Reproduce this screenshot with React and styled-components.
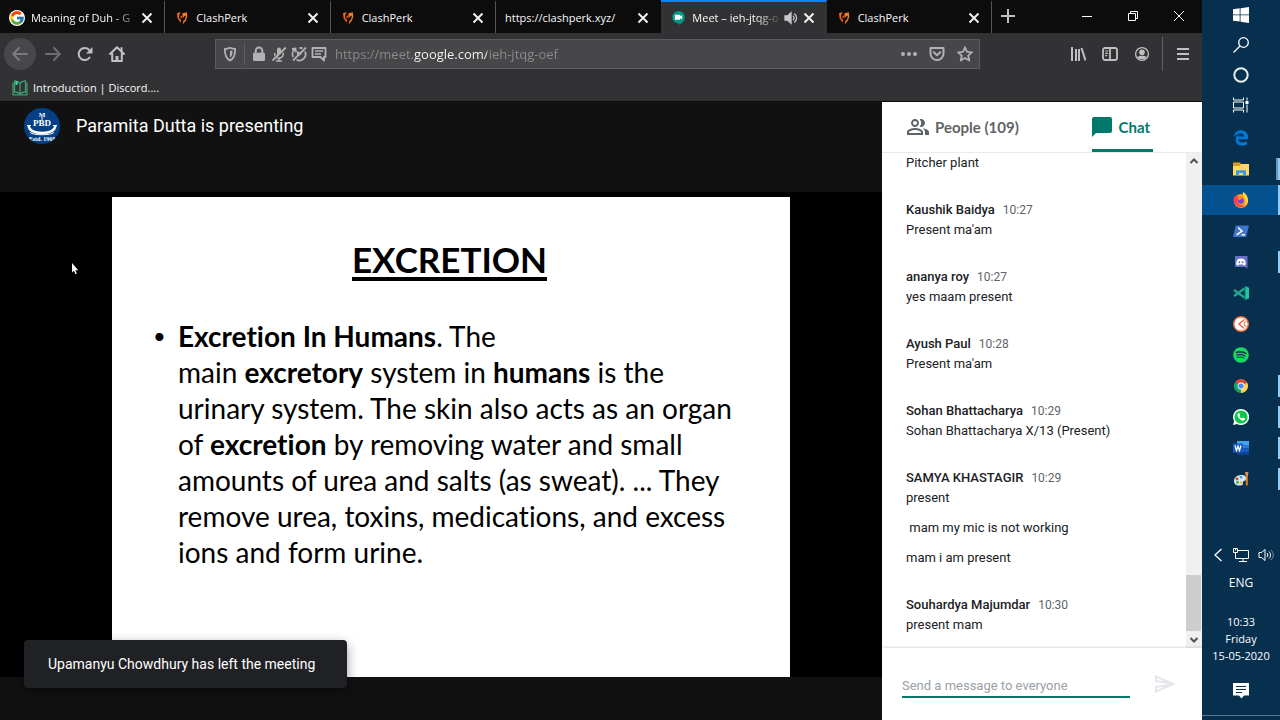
import React from "react";
import styled, { createGlobalStyle } from "styled-components";
import { FcGoogle } from "react-icons/fc";
import { FaSpotify, FaEdgeLegacy } from "react-icons/fa";
import { MdOutlinePeopleAlt, MdChatBubble, MdOutlineSend } from "react-icons/md";

const ui = `"Open Sans", "Noto Sans", sans-serif`;

const GlobalStyle = createGlobalStyle`
  * { box-sizing: border-box; }
  body { margin: 0; background: #0c0c0d; font-family: Roboto, "Liberation Sans", sans-serif; }
  button, input { font: inherit; color: inherit; background: none; border: 0; padding: 0; margin: 0; outline: 0; }
  svg { display: block; flex: none; }
  p, h1, h2, ul { margin: 0; padding: 0; }
`;

const Desktop = styled.div`
  display: flex;
  height: 100vh;
`;

const Browser = styled.div`
  flex: 1;
  min-width: 0;
  display: flex;
  flex-direction: column;
`;

/* ---------- tab strip ---------- */

const TabStrip = styled.header`
  display: flex;
  height: 33px;
  background: #0c0c0d;
  color: #f9f9fa;
  font: 11px/33px ${ui};
`;

const Tabs = styled.div`
  flex: 0 1 992px;
  min-width: 0;
  display: grid;
  grid-template-columns: repeat(6, minmax(0, 1fr));
`;

const Tab = styled.div`
  display: flex;
  align-items: center;
  height: 33px;
  padding: 0 11px 0 9px;
  background: ${(p) => (p.$active ? "#323234" : "transparent")};
  border-top: 2px solid ${(p) => (p.$active ? "#0a84ff" : "transparent")};
  border-right: 1px solid ${(p) => (p.$edge ? "#56565a" : "transparent")};
`;

const TabTitle = styled.button`
  flex: 1;
  min-width: 0;
  display: flex;
  align-items: center;
  gap: 6px;
  height: 31px;
  overflow: hidden;
  white-space: nowrap;
  text-align: left;
  ${(p) => p.$fade && "mask-image: linear-gradient(to right, #000 calc(100% - 28px), transparent);"}
`;

const IconButton = styled.button`
  flex: none;
  display: flex;
  align-items: center;
  justify-content: center;
  width: ${(p) => p.$w || 32}px;
  height: ${(p) => p.$h || 32}px;
  color: ${(p) => p.$color || "#c0c0c2"};
`;

const BackButton = styled(IconButton)`
  margin-right: 1px;
  border-radius: 50%;
  background: #48484a;
`;

const MuteButton = styled(IconButton)`
  margin-right: 4px;
`;

const WindowControls = styled.div`
  display: flex;
  margin-left: auto;
`;

/* ---------- navigation ---------- */

const NavBar = styled.nav`
  display: flex;
  align-items: center;
  height: 41px;
  padding: 0 3px 0 4px;
  background: #323234;
`;

const AddressBar = styled.div`
  flex: 1;
  min-width: 0;
  display: flex;
  align-items: center;
  height: 30px;
  margin: 0 82px;
  background: #474749;
  border: 1px solid #5c5c5f;
`;

const Divider = styled.span`
  width: 1px;
  height: ${(p) => p.$h}px;
  margin: 0 ${(p) => p.$m}px;
  background: #5f6062;
`;

const Address = styled.input`
  flex: 1;
  min-width: 0;
  height: 28px;
  margin-left: 10px;
  font: 13px/28px ${ui};
  color: transparent;
  background: linear-gradient(to right, #8b8b8d 79px, #f9f9fa 79px 152px, #8b8b8d 152px);
  background-clip: text;
  -webkit-background-clip: text;
`;

const Bookmarks = styled.div`
  display: flex;
  height: 28px;
  padding: 0 12px;
  background: #323234;
  border-bottom: 1px solid #0c0c0d;
  color: #f9f9fa;
  font: 11px/27px ${ui};
`;

const Bookmark = styled.a`
  display: flex;
  align-items: center;
  gap: 5px;
  color: inherit;
  text-decoration: none;
`;

/* ---------- meeting ---------- */

const Meeting = styled.main`
  flex: 1;
  display: flex;
  min-height: 0;
`;

const Stage = styled.section`
  position: relative;
  flex: 1;
  min-width: 0;
  display: flex;
  flex-direction: column;
  background: #111;
`;

const Presenter = styled.div`
  display: flex;
  align-items: flex-start;
  gap: 16px;
  height: 90px;
  padding: 6px 24px;
  color: #fff;
  font-size: 18px;
  line-height: 36px;
`;

const Video = styled.div`
  flex: 1;
  display: flex;
  margin-bottom: 43px;
  padding: 5px 92px 0 112px;
  background: #000;
`;

const Slide = styled.article`
  flex: 1;
  min-width: 0;
  padding: 44px 20px 0 66px;
  background: #fff;
  color: #000;
  font-family: Lato, "Open Sans", sans-serif;
  font-variant-ligatures: none;
  white-space: nowrap;
`;

const SlideTitle = styled.h1`
  width: max-content;
  margin: 0 auto 37px 174px;
  border-bottom: 4px solid #000;
  font-size: 35px;
  line-height: 36px;
`;

const SlideList = styled.ul`
  font-size: 28px;
  line-height: 36px;
  list-style: none;

  li::before {
    content: "•";
    float: left;
    width: 25px;
    margin-left: -25px;
    font-size: 22px;
  }
`;

const Toast = styled.div`
  position: absolute;
  left: 24px;
  bottom: 32px;
  min-width: 323px;
  padding: 14px 24px;
  border-radius: 4px;
  background: #202124;
  box-shadow: 0 4px 12px rgba(0, 0, 0, 0.4);
  color: #fff;
  font-size: 14px;
  line-height: 20px;
`;

const Pointer = styled.svg`
  position: absolute;
  left: 71px;
  top: 160px;
`;

/* ---------- chat ---------- */

const Panel = styled.aside`
  flex: none;
  width: 320px;
  display: flex;
  flex-direction: column;
  background: #fff;
  color: #202124;
  font-size: 13px;
  line-height: 20px;
`;

const PanelTabs = styled.div`
  display: flex;
  justify-content: space-between;
  height: 51px;
  padding: 0 49px 0 24px;
  border-bottom: 1px solid #e8eaed;
`;

const PanelTab = styled.button`
  display: flex;
  align-items: center;
  gap: 5px;
  height: 50px;
  padding-right: 3px;
  color: ${(p) => (p.$active ? "#00796b" : "#5f6368")};
  font: 700 15px/20px Lato, sans-serif;
  background: ${(p) =>
    p.$active ? "linear-gradient(#00796b, #00796b) 2px 100% / 100% 3px no-repeat" : "none"};
`;

const Log = styled.div`
  flex: 1;
  display: flex;
  min-height: 0;
`;

const Messages = styled.div`
  flex: 1;
  display: flex;
  flex-direction: column;
  justify-content: flex-end;
  gap: 27px;
  overflow: hidden;
  padding: 0 24px 13px;
`;

const Message = styled.div`
  display: flex;
  flex-direction: column;
`;

const Author = styled.h2`
  display: flex;
  gap: 8px;
  font-size: 13px;
  font-weight: 500;
  line-height: 20px;
`;

const Time = styled.time`
  color: #5f6368;
  font-size: 12px;
  font-weight: 400;
`;

const Line = styled.p`
  white-space: pre;
  & + & { margin-top: 10px; }
`;

const ScrollTrack = styled.div`
  display: flex;
  flex-direction: column;
  justify-content: space-between;
  width: 16px;
  background: #f0f0f0;
`;

const ScrollThumb = styled.div`
  width: 15px;
  height: 56px;
  margin-top: auto;
  background: #cdcdcd;
`;

const Composer = styled.form`
  display: flex;
  align-items: flex-start;
  gap: 23px;
  height: 72px;
  padding: 24px 25px 0 20px;
  background: #fff;
  box-shadow: 0 0 3px rgba(0, 0, 0, 0.25);
`;

const MessageInput = styled.input`
  flex: 1;
  min-width: 0;
  height: 26px;
  padding-top: 2px;
  border-bottom: 2px solid #00796b;
  font-size: 13px;
  &::placeholder { color: #9aa0a6; opacity: 1; }
`;

/* ---------- taskbar ---------- */

const Taskbar = styled.aside`
  flex: none;
  width: 78px;
  display: flex;
  flex-direction: column;
  background: #07304f;
  color: #fff;
`;

const AppList = styled.div`
  display: flex;
  flex-direction: column;
  gap: 1px;
  padding-top: 3px;
`;

const TaskButton = styled.button`
  display: flex;
  align-items: center;
  justify-content: center;
  width: 100%;
  height: 30px;
  background:
    linear-gradient(#90cbf8, #90cbf8) 100% 50% / ${(p) => (p.$mark ? 2 : 0)}px ${(p) => (p.$mark === "full" ? 30 : 22)}px no-repeat,
    linear-gradient(#7396af, #7396af) 100% 50% / ${(p) => (p.$mark === "stack" ? 4 : 0)}px 22px no-repeat,
    ${(p) => (p.$mark === "full" ? "#03528f" : "transparent")};
`;

const Tray = styled.div`
  display: flex;
  flex-direction: column;
  align-items: center;
  margin-top: auto;
  margin-bottom: 4px;
  border-bottom: 1px solid #587791;
  font: 12px/24px ${ui};
`;

const TrayRow = styled.div`
  display: flex;
  align-items: center;
  justify-content: space-between;
  width: 66px;
  height: 24px;
  margin-bottom: 4px;
  padding-left: 5px;
`;

const Clock = styled.time`
  margin: 18px 0 17px;
  font-size: 11px;
  line-height: 17px;
  text-align: center;
`;

const Notifications = styled.button`
  height: 20px;
  margin-bottom: 14px;
`;

/* ---------- drawings ---------- */

const Svg = ({ s = 16, w, h, box, children, ...rest }) => (
  <svg width={w || s} height={h || s} viewBox={box || `0 0 ${w || s} ${h || s}`} fill="none" aria-hidden="true" {...rest}>
    {children}
  </svg>
);

const CloseIcon = () => (
  <Svg s={12} stroke="#f0f0f1" strokeWidth="2"><path d="M1.500 1.500l9 9M10.500 1.500l-9 9" /></Svg>
);

const ClashIcon = () => (
  <Svg>
    <path d="M6.600 2L3 3.300 3.600 8.200 6.600 12.800 7 9.600 5.300 8.800 5 5.800z" fill="#f4671f" />
    <path d="M6.800 5.500l1.400.4-1 2.600-.9-.4z" fill="#f4671f" />
    <path d="M8.400 3.200l4.400-.9.500 4.200-1.300 4-3.600 4.300 1.200-4.600 1.500-.8.700-3.700-1.600.5-1.600 2.300z" fill="#f57a20" />
  </Svg>
);

const MeetIcon = () => (
  <Svg>
    <path d="M8.500 1a6.200 6.200 0 0 1 6.200 6.200c0 4-3.400 6.200-5.400 7.800v-1.600h-.8A6.200 6.200 0 0 1 8.500 1z" fill="#009688" />
    <path d="M4.800 4.700h5.400v1.800l2-1.500v4.400l-2-1.500v1.800H4.800z" fill="#fff" />
  </Svg>
);

const SpeakerIcon = () => (
  <Svg s={14} stroke="#c8c8ca" strokeWidth="1.300">
    <path d="M1 5h2.500L7 1.800v10.400L3.500 9H1z" fill="#c8c8ca" />
    <path d="M9 4.800c1.300 1 1.300 3.400 0 4.400M10.300 2.500c3 2 3 7 0 9" />
  </Svg>
);

const Arrow = ({ flip }) => (
  <Svg stroke="currentColor" strokeWidth="2" strokeLinecap="round" strokeLinejoin="round" transform={flip ? "rotate(180)" : undefined}>
    <path d="M15 8H1.500M7 2L1.200 8 7 14" />
  </Svg>
);

const ReloadIcon = () => (
  <Svg>
    <path d="M12.600 11.500A6 6 0 1 1 12 3.800" stroke="currentColor" strokeWidth="2" strokeLinecap="round" />
    <path d="M15.500 1v6.500H9z" fill="currentColor" />
  </Svg>
);

const HomeIcon = () => (
  <Svg stroke="currentColor" strokeWidth="2" strokeLinejoin="round" strokeLinecap="round">
    <path d="M1 8l7-6.800L15 8M3.200 7.500V15h9.600V7.500" />
    <path d="M8 15V10" strokeWidth="3" strokeLinecap="butt" />
    <path d="M12.500 2v3" />
  </Svg>
);

const ShieldIcon = () => (
  <Svg>
    <path d="M8 1.800c2 .9 3.700 1.200 5.200 1.200 0 5.600-.7 9.500-5.200 11.500C3.500 12.500 2.800 8.600 2.800 3 4.300 3 6 2.700 8 1.800z" stroke="currentColor" strokeWidth="1.800" strokeLinejoin="round" />
    <path d="M8 4.500c.8.300 1.800.5 2.500.6 0 3.600-.5 5.300-2.500 6.600z" fill="currentColor" />
  </Svg>
);

const LockIcon = () => (
  <Svg>
    <path d="M4.700 8V4.800a3.300 3.300 0 0 1 6.600 0V8" stroke="currentColor" strokeWidth="2" />
    <rect x="2" y="6.800" width="12" height="8.200" rx="1.200" fill="currentColor" />
  </Svg>
);

const MicOffIcon = () => (
  <Svg stroke="currentColor" strokeWidth="1.500">
    <path d="M6 3.500a2 2 0 0 1 4 0v3l-4 4z" fill="currentColor" stroke="none" />
    <path d="M3.800 7v1.500c0 .5.100 1 .3 1.500M12.200 6.500v2c0 3-4.500 4.700-6.500 3M8 12.500V15M5 15h6" />
    <path d="M14.800 1.500L1.500 14.500" strokeWidth="1.800" />
  </Svg>
);

const AutoplayOffIcon = () => (
  <Svg stroke="currentColor" strokeWidth="1.800">
    <path d="M2.200 11A6.200 6.200 0 0 1 4 3.200M14 5.500a6.300 6.300 0 0 1-8.500 8.300M1 3l3.500-.5.500 4M8.500 2h3" />
    <path d="M6 5v6l5-3.200z" fill="currentColor" stroke="none" />
    <path d="M15 1.500L2 14.500" />
  </Svg>
);

const NoticeIcon = () => (
  <Svg stroke="currentColor" strokeWidth="1.800" strokeLinejoin="round">
    <path d="M1.500 2h13v9H13v3.500L9.500 11h-8z" />
    <path d="M4 5h8M4 8h6" strokeWidth="1.500" />
  </Svg>
);

const DotsIcon = () => (
  <Svg fill="currentColor"><circle cx="2" cy="8" r="2" /><circle cx="8" cy="8" r="2" /><circle cx="14" cy="8" r="2" /></Svg>
);

const PocketIcon = () => (
  <Svg stroke="currentColor" strokeWidth="2" strokeLinecap="round" strokeLinejoin="round">
    <path d="M1.500 2h13v5.500a6.500 6.500 0 0 1-13 0z" />
    <path d="M4.800 6.300L8 9.300l3.200-3" />
  </Svg>
);

const StarIcon = () => (
  <Svg stroke="currentColor" strokeWidth="1.800" strokeLinejoin="round">
    <path d="M8 1.300l2 4.500 4.900.5-3.700 3.300 1.100 4.900L8 12l-4.300 2.500 1.100-4.900L1.100 6.300 6 5.800z" />
  </Svg>
);

const LibraryIcon = () => (
  <Svg stroke="currentColor" strokeWidth="2"><path d="M2 1v14M6 3v12M9 3v12M11.500 2l4 12.500" /></Svg>
);

const SidebarIcon = () => (
  <Svg stroke="currentColor" strokeWidth="1.800">
    <rect x="1" y="2" width="14" height="12" rx="2" />
    <path d="M8 2v12" />
    <path d="M3.200 5h3M3.200 7.300h3M3.200 9.600h2" strokeWidth="1.200" />
  </Svg>
);

const AccountIcon = () => (
  <Svg>
    <circle cx="8" cy="8" r="6.400" stroke="currentColor" strokeWidth="1.300" />
    <circle cx="8" cy="6.300" r="2.800" fill="currentColor" />
    <path d="M3.300 11c1.600-1.600 7.800-1.600 9.400 0-1.600 3-7.800 3-9.400 0z" fill="currentColor" />
  </Svg>
);

const MenuIcon = () => (
  <Svg stroke="currentColor" strokeWidth="2"><path d="M2 3h12M2 8h12M2 13h12" /></Svg>
);

const BookIcon = () => (
  <Svg stroke="#3f9c74" strokeWidth="1.300" strokeLinejoin="round">
    <path d="M8 3.500C6.500 1.500 4.500 1 2.500 1v11c2 0 4 .3 5.500 2 1.500-1.700 3.500-2 5.500-2V1C11.500 1 9.500 1.500 8 3.500zM8 3.500V14" />
    <path d="M1 2.500v12.300h14V2.500" />
    <path d="M4.500 1v4" stroke="#37e09a" strokeWidth="2" />
  </Svg>
);

const Avatar = () => (
  <Svg s={36}>
    <clipPath id="crest"><circle cx="18" cy="18" r="18" /></clipPath>
    <g clipPath="url(#crest)">
      <rect width="36" height="36" fill="#053f86" />
      <g fill="#fff" fontFamily="Liberation Serif, serif" fontWeight="700" textAnchor="middle">
        <text x="18" y="9" fontSize="7">M</text>
        <text x="18" y="18" fontSize="9">PBD</text>
        <text x="18" y="33" fontSize="6">Estd. 1969</text>
      </g>
      <path d="M4.500 18c1 5 6 7 13.500 7s12.500-2 13.500-7" stroke="#fff" strokeWidth="2.500" />
      <path d="M3 17.500h4M29 17.500h4M6 24.500c4 3 20 3 24 0M18 9v3" stroke="#fff" strokeWidth="1" />
    </g>
  </Svg>
);

const WindowsIcon = () => (
  <Svg fill="#fff"><path d="M0 2.300l6.700-1v6.200H0zM7.500 1.200L16 0v7.500H7.500zM0 8.300h6.700v6.300L0 13.700zM7.500 8.300H16V16l-8.500-1.200z" /></Svg>
);
const SearchIcon = () => (
  <Svg stroke="#fff" strokeWidth="1.300"><circle cx="10.500" cy="5.500" r="4.800" /><path d="M7 9L.5 15.500" /></Svg>
);
const CortanaIcon = () => (
  <Svg stroke="#e8eef2" strokeWidth="2"><circle cx="8" cy="8" r="6.700" /></Svg>
);
const TaskViewIcon = () => (
  <Svg stroke="#fff" strokeWidth="1">
    <path d="M.5.500v2.500h10V.5M.5 15.500V13h10v2.500M.5 5h10v6H.5zM14 .5v3M14 7.500v8" />
    <rect x="12.500" y="4" width="3" height="3" fill="#fff" stroke="none" />
  </Svg>
);
const FolderIcon = () => (
  <Svg>
    <path d="M0 1.500h7l1 1.500H0z" fill="#e5a00d" /><path d="M0 3h16v11.500H0z" fill="#ffd868" />
    <path d="M0 3h8L6.500 5H0z" fill="#d99a16" />
    <path d="M3 14.500V9.300h10v5.200h-3V12H6v2.500z" fill="#3f9bdc" />
  </Svg>
);
const FirefoxIcon = () => (
  <Svg>
    <circle cx="8" cy="9" r="7" fill="#ff9a1f" />
    <path d="M1.500 4l1.700 1.500L4 3l1.500 2.500L9 6 4 9l2 4 5 .5 4-4.500A7.300 7.300 0 1 1 1.500 4z" fill="#ff3b52" />
    <path d="M10 0c3.500 2 5.500 5.500 5 9-.5 3-2 4.500-4 5.500 2-3 2-6 .5-8.500C10.300 4.500 9.500 2.500 10 0z" fill="#ffd83b" />
    <circle cx="7.800" cy="8.800" r="3" fill="#7541d8" />
    <path d="M3.500 6c2-1 4-.5 5.500.5L6.500 8.500z" fill="#ff8a16" />
  </Svg>
);
const PowerShellIcon = () => (
  <Svg>
    <path d="M2.800 2.500H16L13.200 14H0z" fill="#3f74cf" />
    <path d="M5 4.500l4 3.700-5.500 3.600M8.500 11.800H12" stroke="#fff" strokeWidth="1.500" />
  </Svg>
);
const DiscordIcon = () => (
  <Svg>
    <path d="M2 2h12.500v12.500L12 13H2z" fill="#6673c5" />
    <path d="M4.500 5.500c2-1.300 5-1.300 7 0 .8 1.200 1.300 3 1.300 4.700-.7.900-1.600 1.200-2.300 1.200l-.7-1H6.200l-.7 1c-.7 0-1.600-.3-2.300-1.200 0-1.700.5-3.500 1.300-4.700z" fill="#fff" />
    <circle cx="6.300" cy="8.200" r="1" fill="#6673c5" /><circle cx="9.700" cy="8.200" r="1" fill="#6673c5" />
  </Svg>
);
const CodeIcon = () => (
  <Svg>
    <path d="M12 1v14l4-1.700V2.700z" fill="#23c3a4" />
    <path d="M1 5l10.500 7.500M1 11l10.500-7.500" stroke="#1fa88d" strokeWidth="2.200" />
    <path d="M12 1v14" stroke="#0b8078" strokeWidth="1" />
  </Svg>
);
const PostIcon = () => (
  <Svg>
    <circle cx="8" cy="8" r="7.300" fill="#fff" stroke="#f1643a" strokeWidth="1.400" />
    <path d="M11.500 3.500L6 8l5 4.500" stroke="#f1643a" strokeWidth="1.500" />
    <path d="M13.500 5.500a2.500 2.500 0 0 0 0 5" stroke="#f1643a" strokeWidth="1" />
  </Svg>
);
const ChromeIcon = () => (
  <Svg>
    <path d="M8 8L1.900 4.500A7 7 0 0 1 14.100 4.500z" fill="#dd4b3e" />
    <path d="M8 8l6.100-3.500A7 7 0 0 1 8 15z" fill="#fdd049" />
    <path d="M8 8v7A7 7 0 0 1 1.900 4.500z" fill="#1aa15f" />
    <circle cx="8" cy="8" r="3.400" fill="#fff" /><circle cx="8" cy="8" r="2.600" fill="#4a8af4" />
  </Svg>
);
const WhatsAppIcon = () => (
  <Svg>
    <path d="M8 0a8 8 0 1 1-3.800 15L0 16l1.100-4A8 8 0 0 1 8 0z" fill="#fff" />
    <circle cx="8" cy="8" r="6.600" fill="#16c34a" />
    <path d="M5 4.300l1.300-.3.900 2.200-.7 1c.6 1.100 1.400 1.900 2.500 2.400l.9-1 2.100 1-.2 1.200c-1 1.300-3.200.8-5-.8-2-1.800-3-4.300-1.800-5.700z" fill="#fff" />
  </Svg>
);
const WordIcon = () => (
  <Svg>
    <path d="M4 1h12v4H4z" fill="#41a5ee" /><path d="M4 5h12v3.500H4z" fill="#2b7cd3" />
    <path d="M4 8.500h12V12H4z" fill="#185abd" /><path d="M4 12h12v3H4z" fill="#103f91" />
    <path d="M0 3.500h10v9H0z" fill="#1b5cbe" />
    <path d="M2 5.500l1.500 5L5 6.300l1.500 4.200 1.500-5" stroke="#fff" strokeWidth="1.300" />
  </Svg>
);
const PaintIcon = () => (
  <Svg>
    <path d="M1 10c0-4 4-6 7.500-6C12 4 14 6 13 8.500c-.7 1.800-2.500.8-3 2.500s1 3-2.500 3.500C4 15 1 13.500 1 10z" fill="#d7e8f4" />
    <circle cx="4" cy="8" r="1.400" fill="#e23c2b" /><circle cx="8" cy="6.300" r="1.300" fill="#2f9be0" />
    <circle cx="4.500" cy="11.500" r="1.400" fill="#46b04a" /><circle cx="8" cy="11.500" r="1.300" fill="#f0bb25" />
    <path d="M12 1h3.500l-.7 4h-2z" fill="#d59253" /><path d="M12.800 5h2v9l-1 1-1-1z" fill="#e37d20" />
  </Svg>
);
const Scroller = ({ down }) => (
  <Svg w={16} h={17} stroke="#505050" strokeWidth="2"><path d={down ? "M4.500 7L8 10.500 11.500 7" : "M4.500 10L8 6.500l3.500 3.500"} /></Svg>
);

/* ---------- data ---------- */

const tabs = [
  { title: "Meaning of Duh - G", icon: <FcGoogle size={16} style={{ background: "#fff", borderRadius: 8 }} />, fade: true, edge: true },
  { title: "ClashPerk", icon: <ClashIcon />, edge: true },
  { title: "ClashPerk", icon: <ClashIcon />, edge: true },
  { title: "https://clashperk.xyz/" },
  { title: "Meet – ieh-jtqg-o", icon: <MeetIcon />, fade: true, active: true, sound: true },
  { title: "ClashPerk", icon: <ClashIcon />, edge: true },
];

const messages = [
  { lines: ["Pitcher plant"] },
  { name: "Kaushik Baidya", time: "10:27", lines: ["Present ma'am"] },
  { name: "ananya roy", time: "10:27", lines: ["yes maam present"] },
  { name: "Ayush Paul", time: "10:28", lines: ["Present ma'am"] },
  { name: "Sohan Bhattacharya", time: "10:29", lines: ["Sohan Bhattacharya X/13 (Present)"] },
  { name: "SAMYA KHASTAGIR", time: "10:29", lines: ["present", " mam my mic is not working", "mam i am present"] },
  { name: "Souhardya Majumdar", time: "10:30", lines: ["present mam"] },
];

const system = [
  ["Start", <WindowsIcon />],
  ["Search", <SearchIcon />],
  ["Cortana", <CortanaIcon />],
  ["Task view", <TaskViewIcon />],
];

const apps = [
  ["Edge", <FaEdgeLegacy size={16} color="#0078d7" />],
  ["File Explorer", <FolderIcon />, "stack"],
  ["Firefox", <FirefoxIcon />, "full"],
  ["PowerShell", <PowerShellIcon />],
  ["Discord", <DiscordIcon />, "run"],
  ["Code", <CodeIcon />],
  ["Postman", <PostIcon />],
  ["Spotify", <FaSpotify size={16} color="#1ed760" />],
  ["Chrome", <ChromeIcon />, "run"],
  ["WhatsApp", <WhatsAppIcon />, "run"],
  ["Word", <WordIcon />, "run"],
  ["Paint", <PaintIcon />, "run"],
];

export default function App() {
  return (
    <Desktop>
      <GlobalStyle />
      <Browser>
        <TabStrip>
          <Tabs>
            {tabs.map((t, i) => (
              <Tab key={i} $active={t.active} $edge={t.edge}>
                <TabTitle $fade={t.fade}>{t.icon}<span>{t.title}</span></TabTitle>
                {t.sound && <MuteButton $w={16} $h={16} aria-label="Mute tab"><SpeakerIcon /></MuteButton>}
                <IconButton $w={12} $h={24} aria-label="Close tab"><CloseIcon /></IconButton>
              </Tab>
            ))}
          </Tabs>
          <IconButton aria-label="New tab"><Svg s={14} stroke="#c0c0c2" strokeWidth="2"><path d="M7 0v14M0 7h14" /></Svg></IconButton>
          <WindowControls>
            <IconButton $w={46} aria-label="Minimize"><Svg s={10} stroke="#fff"><path d="M0 5.500h10" /></Svg></IconButton>
            <IconButton $w={46} aria-label="Restore"><Svg s={10} stroke="#fff"><path d="M.5 2.500h7v7h-7zM2.500 2.500v-2h7v7h-2" /></Svg></IconButton>
            <IconButton $w={46} aria-label="Close"><Svg s={10} stroke="#fff"><path d="M0 0l10 10M10 0L0 10" /></Svg></IconButton>
          </WindowControls>
        </TabStrip>

        <NavBar>
          <BackButton $color="#7b7b7d" aria-label="Back"><Arrow /></BackButton>
          <IconButton $color="#6e6e70" aria-label="Forward"><Arrow flip /></IconButton>
          <IconButton aria-label="Reload"><ReloadIcon /></IconButton>
          <IconButton aria-label="Home"><HomeIcon /></IconButton>
          <AddressBar>
            <IconButton $w={28} $h={28} $color="#b2b2b4" aria-label="Tracking protection"><ShieldIcon /></IconButton>
            <Divider $h={22} $m={0} />
            <IconButton $w={28} $h={28} $color="#b2b2b4" aria-label="Site information"><LockIcon /></IconButton>
            <IconButton $w={12} $h={28} $color="#b2b2b4" aria-label="Microphone blocked"><MicOffIcon /></IconButton>
            <IconButton $w={28} $h={28} $color="#b2b2b4" aria-label="Autoplay blocked"><AutoplayOffIcon /></IconButton>
            <IconButton $w={12} $h={28} $color="#b2b2b4" aria-label="Notifications"><NoticeIcon /></IconButton>
            <Address aria-label="Address" defaultValue="https://meet.google.com/ieh-jtqg-oef" />
            <IconButton $w={28} $h={28} $color="#b2b2b4" aria-label="Page actions"><DotsIcon /></IconButton>
            <IconButton $w={28} $h={28} $color="#b2b2b4" aria-label="Save to Pocket"><PocketIcon /></IconButton>
            <IconButton $w={28} $h={28} $color="#b2b2b4" aria-label="Bookmark"><StarIcon /></IconButton>
          </AddressBar>
          <IconButton aria-label="Library"><LibraryIcon /></IconButton>
          <IconButton aria-label="Sidebars"><SidebarIcon /></IconButton>
          <IconButton aria-label="Account"><AccountIcon /></IconButton>
          <Divider $h={34} $m={4} />
          <IconButton aria-label="Menu"><MenuIcon /></IconButton>
        </NavBar>

        <Bookmarks>
          <Bookmark href="#intro"><BookIcon />Introduction | Discord....</Bookmark>
        </Bookmarks>

        <Meeting>
          <Stage>
            <Presenter><Avatar />Paramita Dutta is presenting</Presenter>
            <Video>
              <Slide>
                <SlideTitle>EXCRETION</SlideTitle>
                <SlideList>
                  <li>
                    <b>Excretion In Humans</b>. The<br />
                    main <b>excretory</b> system in <b>humans</b> is the<br />
                    urinary system. The skin also acts as an organ<br />
                    of <b>excretion</b> by removing water and small<br />
                    amounts of urea and salts (as sweat). ... They<br />
                    remove urea, toxins, medications, and excess<br />
                    ions and form urine.
                  </li>
                </SlideList>
              </Slide>
            </Video>
            <Pointer width="8" height="13" viewBox="0 0 8 13" aria-hidden="true">
              <path d="M1 1v9.500l2-1.800 1.500 3.500 1.300-.6-1.400-3.400h2.800z" fill="#fff" />
            </Pointer>
            <Toast role="status">Upamanyu Chowdhury has left the meeting</Toast>
          </Stage>

          <Panel>
            <PanelTabs>
              <PanelTab><MdOutlinePeopleAlt size={24} />People (109)</PanelTab>
              <PanelTab $active><MdChatBubble size={24} />Chat</PanelTab>
            </PanelTabs>
            <Log>
              <Messages>
                {messages.map((m, i) => (
                  <Message key={i}>
                    {m.name && <Author>{m.name}<Time>{m.time}</Time></Author>}
                    {m.lines.map((l) => <Line key={l}>{l}</Line>)}
                  </Message>
                ))}
              </Messages>
              <ScrollTrack><Scroller /><ScrollThumb /><Scroller down /></ScrollTrack>
            </Log>
            <Composer onSubmit={(e) => e.preventDefault()}>
              <MessageInput aria-label="Message" placeholder="Send a message to everyone" />
              <IconButton $w={24} $h={24} $color="#e4e6e9" aria-label="Send"><MdOutlineSend size={24} /></IconButton>
            </Composer>
          </Panel>
        </Meeting>
      </Browser>

      <Taskbar>
        {system.map(([name, icon]) => <TaskButton key={name} aria-label={name}>{icon}</TaskButton>)}
        <AppList>
          {apps.map(([name, icon, mark]) => <TaskButton key={name} aria-label={name} $mark={mark}>{icon}</TaskButton>)}
        </AppList>
        <Tray>
          <TrayRow>
            <Svg w={10} h={14} stroke="#fff" strokeWidth="1.300"><path d="M8.500 1L2 7l6.500 6" /></Svg>
            <Svg stroke="#fff"><path d="M4.500 3.500h11v8H4.500M2.500 5.500v6h4M10 11.500v3M6 14.500h8M.5 1.500h4v4h-4zM2.500 1.500v2" /></Svg>
            <Svg stroke="#fff">
              <path d="M1 5.500h2.500L7 2.500v11l-3.500-3H1z" /><path d="M9 6c1 1 1 3 0 4M11 4.500c2 2 2 5 0 7" />
              <path d="M13 3c3 3 3 7 0 10" stroke="#7790a2" />
            </Svg>
          </TrayRow>
          <span>ENG</span>
          <Clock>10:33<br />Friday<br />15-05-2020</Clock>
          <Notifications aria-label="Notifications">
            <Svg><path d="M0 0h16v12.500h-5L8.500 15.500 6 12.500H0z" fill="#fff" /><path d="M3 3.500h10M3 6.500h10M3 9.500h6" stroke="#07304f" /></Svg>
          </Notifications>
        </Tray>
      </Taskbar>
    </Desktop>
  );
}
